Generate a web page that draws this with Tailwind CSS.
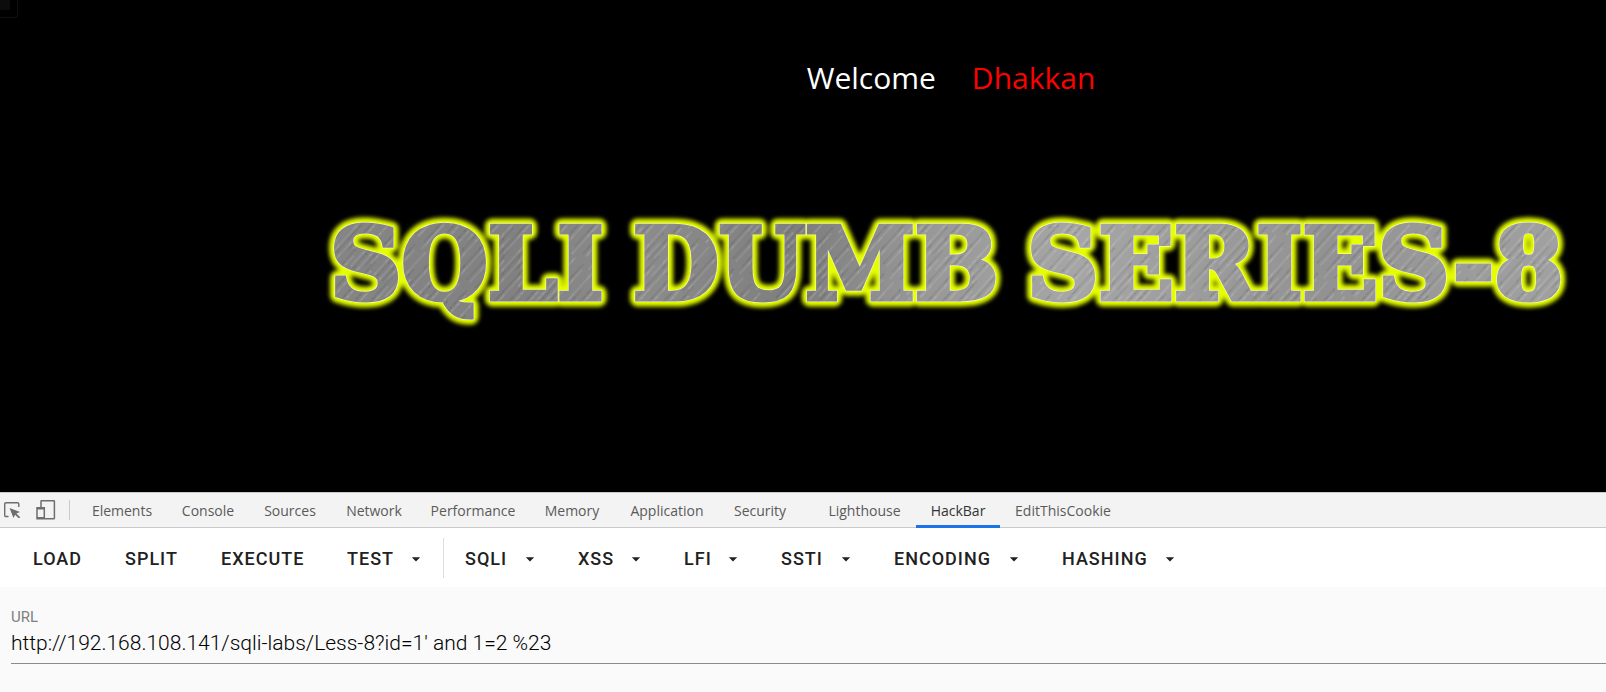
<!DOCTYPE html>
<html lang="en">
<head>
<meta charset="utf-8">
<title>SQLI Dumb Series-8</title>
<script src="https://cdn.jsdelivr.net/npm/@tailwindcss/browser@4"></script>
</head>
<body class="flex min-h-screen flex-col bg-[#fafafa]">
<main class="relative h-[492px] shrink-0 overflow-hidden bg-black pl-[296px]">
  <div class="absolute left-0 top-0 size-[18px] rounded-br border-b border-r border-[#101010]"><div class="size-[10px] bg-[#0c0c0c]"></div></div>
  <h1 class="flex h-[154px] items-center justify-center gap-9 whitespace-nowrap font-['Open_Sans',sans-serif] text-[30px] text-white"><span>Welcome</span><span class="text-[#ff0000]">Dhakkan</span></h1>
  <svg class="mx-auto mt-8 block h-[150px] w-full" viewBox="296 186 1310 150" role="img" aria-label="SQLI DUMB SERIES-8">
    <defs>
      <linearGradient id="base" gradientUnits="userSpaceOnUse" x1="330" y1="220" x2="1570" y2="320">
        <stop offset="0" stop-color="#858585"/><stop offset=".15" stop-color="#818181"/><stop offset=".25" stop-color="#8c8c8c"/><stop offset=".38" stop-color="#7e7e7e"/><stop offset=".47" stop-color="#969696"/><stop offset=".6" stop-color="#a6a6a6"/><stop offset=".8" stop-color="#929292"/><stop offset="1" stop-color="#a2a2a2"/>
      </linearGradient>
      <pattern id="brush" patternUnits="userSpaceOnUse" width="23" height="97" patternTransform="rotate(42)">
        <path d="M2 0v60M9 30v60M15 5v40M20 50v47" stroke="#fff" stroke-opacity=".16"/>
        <path d="M5 20v70M12 0v50M17 40v50" stroke="#333" stroke-opacity=".16"/>
      </pattern>
      <filter id="glow" filterUnits="userSpaceOnUse" x="296" y="186" width="1310" height="150"><feGaussianBlur stdDeviation="2"/></filter>
      <g id="title" font-family="'DejaVu Serif', serif" font-weight="700" font-size="99">
        <text y="299"><tspan x="330">SQLI</tspan><tspan x="633">DUMB</tspan><tspan x="1027">SERIES-8</tspan></text>
      </g>
    </defs>
    <use href="#title" fill="#e6ff00" stroke="#e6ff00" stroke-width="15" stroke-linejoin="round" filter="url(#glow)"/>
    <use href="#title" fill="#fff" stroke="#ffffc8" stroke-width="6"/>
    <use href="#title" fill="url(#base)" stroke="url(#base)" stroke-width="5"/>
    <use href="#title" fill="url(#brush)" stroke="url(#brush)" stroke-width="5"/>
  </svg>
</main>
<nav class="flex h-9 shrink-0 items-stretch border-y border-[#cacaca] bg-[#f3f3f3] font-['Open_Sans',sans-serif] text-sm text-[#5a5a5a]">
  <button class="flex w-8 items-center pl-1" aria-label="Inspect element"><svg class="size-4" viewBox="0 0 16 16" fill="none"><path d="M4.500 14.500H2q-1.300 0-1.300-1.300V2Q.7.700 2 .7h11.500q1.300 0 1.300 1.300v3" stroke="#6e6e6e" stroke-width="1.400"/><path d="M5.500 6l10.500 4-3.600 1.500 3.800 3.700-1.300 1.300-3.800-3.800L9.500 16z" fill="#6e6e6e"/></svg></button>
  <button class="flex w-[37px] items-center pl-1" aria-label="Toggle device toolbar"><svg class="h-5 w-5" viewBox="0 0 20 20" fill="none" stroke="#6e6e6e" stroke-width="1.500"><path d="M5 7V1.200Q5 .7 5.500.7h12.300q.6 0 .6.500v17q0 .6-.6.600H9M1 7.700h7.300v11.100H1zM1 8.700h7.300M1 17.800h7.300"/></svg></button>
  <span class="mr-[7px] h-5 w-px self-center bg-[#cacaca]"></span>
  <button class="w-[90px] pt-0.5">Elements</button>
  <button class="w-[82px] pt-0.5">Console</button>
  <button class="w-[82px] pt-0.5">Sources</button>
  <button class="w-[86px] pt-0.5">Network</button>
  <button class="w-[112px] pt-0.5">Performance</button>
  <button class="w-[86px] pt-0.5">Memory</button>
  <button class="w-[104px] pt-0.5">Application</button>
  <button class="mr-3 w-[82px] pt-0.5">Security</button>
  <button class="w-[103px] pt-0.5">Lighthouse</button>
  <button class="relative w-[84px] pt-0.5 text-[#333]">HackBar<span class="absolute inset-x-0 -bottom-px h-[3px] bg-[#1a73e8]"></span></button>
  <button class="w-[126px] pt-0.5">EditThisCookie</button>
</nav>
<div class="flex h-[59px] shrink-0 items-stretch bg-white pl-3 font-['Roboto',sans-serif] text-lg font-medium tracking-[1px] text-[#212121]">
  <svg class="hidden"><symbol id="arrow" viewBox="0 0 24 24"><path d="M7 10l5 5 5-5z" fill="#212121"/></symbol></svg>
  <button class="w-[92px] pl-[21px] pt-0.5 text-left">LOAD</button>
  <button class="w-[96px] pl-[21px] pt-0.5 text-left">SPLIT</button>
  <button class="w-[126px] pl-[21px] pt-0.5 text-left">EXECUTE</button>
  <button class="flex w-[117px] items-center justify-between pl-[21px] pr-[17px] pt-0.5">TEST<svg class="size-5"><use href="#arrow"/></svg></button>
  <span class="h-10 w-px self-center bg-[#dedede]"></span>
  <button class="flex w-[113px] items-center justify-between pl-[21px] pr-[17px] pt-0.5">SQLI<svg class="size-5"><use href="#arrow"/></svg></button>
  <button class="flex w-[106px] items-center justify-between pl-[21px] pr-[17px] pt-0.5">XSS<svg class="size-5"><use href="#arrow"/></svg></button>
  <button class="flex w-[97px] items-center justify-between pl-[21px] pr-[17px] pt-0.5">LFI<svg class="size-5"><use href="#arrow"/></svg></button>
  <button class="flex w-[113px] items-center justify-between pl-[21px] pr-[17px] pt-0.5">SSTI<svg class="size-5"><use href="#arrow"/></svg></button>
  <button class="flex w-[168px] items-center justify-between pl-[21px] pr-[17px] pt-0.5">ENCODING<svg class="size-5"><use href="#arrow"/></svg></button>
  <button class="flex w-[156px] items-center justify-between pl-[21px] pr-[17px] pt-0.5">HASHING<svg class="size-5"><use href="#arrow"/></svg></button>
</div>
<div class="flex flex-col pl-[11px] pt-5 font-['Roboto',sans-serif]">
  <label for="url" class="text-[15px] leading-5 text-[#808080]">URL</label>
  <input id="url" type="text" value="http://192.168.108.141/sqli-labs/Less-8?id=1' and 1=2 %23" class="h-[37px] w-full border-b border-[#8b8b8b] bg-transparent pb-1 text-[21px] font-light text-black outline-none">
</div>
</body>
</html>
